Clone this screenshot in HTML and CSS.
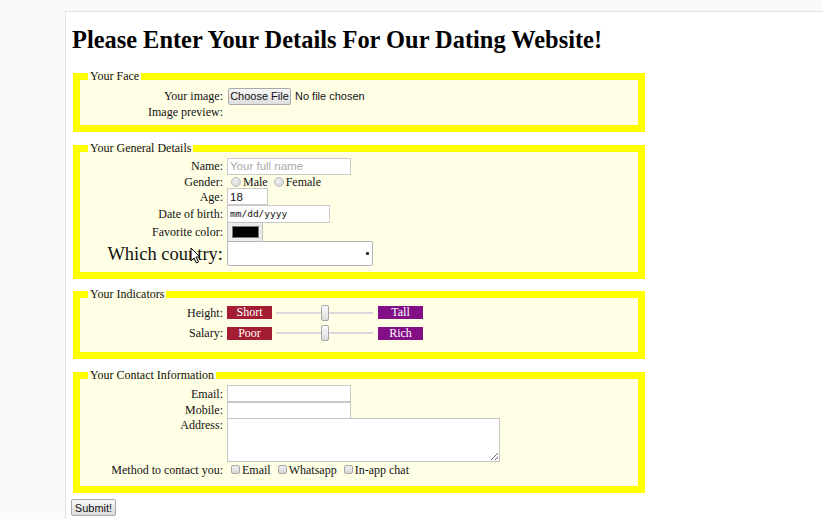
FILE: index.html
```html
<!DOCTYPE html>
<html>
<head>
<meta charset="utf-8">
<title>Dating Website</title>
<link rel="stylesheet" href="styles.css">
</head>
<body>
<div class="page">
  <h1>Please Enter Your Details For Our Dating Website!</h1>
  <form>
    <fieldset class="fs fs-face">
      <legend>Your Face</legend>
      <div class="grid">
        <label class="lbl">Your image:</label>
        <div class="ctrl"><button type="button" class="filebtn">Choose File</button><span class="nofile">No file chosen</span></div>
        <label class="lbl">Image preview:</label>
        <div class="ctrl"></div>
      </div>
    </fieldset>

    <fieldset class="fs fs-general">
      <legend>Your General Details</legend>
      <div class="grid">
        <label class="lbl">Name:</label>
        <div class="ctrl"><input class="txt w124" type="text" placeholder="Your full name"></div>
        <label class="lbl">Gender:</label>
        <div class="ctrl opts"><span class="radio"></span><span class="opt">Male</span><span class="radio"></span><span class="opt">Female</span></div>
        <label class="lbl">Age:</label>
        <div class="ctrl"><input class="txt w41" type="text" value="18"></div>
        <label class="lbl">Date of birth:</label>
        <div class="ctrl"><input class="txt date" type="text" value="mm/dd/yyyy"></div>
        <label class="lbl">Favorite color:</label>
        <div class="ctrl"><span class="colorbtn"><span class="swatch"></span></span></div>
        <label class="lbl big">Which country:</label>
        <div class="ctrl"><span class="select"><span class="dot"></span></span></div>
      </div>
      <svg class="cursor" width="11" height="17" viewBox="0 0 11 17"><path d="M1 1 L1 14 L4 11 L6.5 16 L8.5 15 L6 10 L10 10 Z" fill="#fff" stroke="#000" stroke-width="1"/></svg>
    </fieldset>

    <fieldset class="fs fs-ind">
      <legend>Your Indicators</legend>
      <div class="grid">
        <label class="lbl">Height:</label>
        <div class="ctrl"><span class="badge red">Short</span><span class="range"><span class="track"></span><span class="thumb"></span></span><span class="badge purple">Tall</span></div>
        <label class="lbl">Salary:</label>
        <div class="ctrl"><span class="badge red">Poor</span><span class="range"><span class="track"></span><span class="thumb"></span></span><span class="badge purple">Rich</span></div>
      </div>
    </fieldset>

    <fieldset class="fs fs-contact">
      <legend>Your Contact Information</legend>
      <div class="grid">
        <label class="lbl">Email:</label>
        <div class="ctrl"><input class="txt w124" type="text"></div>
        <label class="lbl">Mobile:</label>
        <div class="ctrl"><input class="txt w124" type="text"></div>
        <label class="lbl top">Address:</label>
        <div class="ctrl top"><textarea class="area"></textarea></div>
        <label class="lbl">Method to contact you:</label>
        <div class="ctrl opts"><span class="check"></span><span class="opt">Email</span><span class="check"></span><span class="opt">Whatsapp</span><span class="check"></span><span class="opt">In-app chat</span></div>
      </div>
    </fieldset>

    <button type="button" class="submit">Submit!</button>
  </form>
</div>
</body>
</html>
```

FILE: styles.css
```css
html, body {
  margin: 0;
  padding: 0;
  background: #fbf9fb;
  height: 100%;
}
body {
  font-family: "Liberation Serif", "Times New Roman", serif;
  font-size: 12px;
  color: #111;
  overflow: hidden;
}
.page {
  box-sizing: border-box;
  margin: 11px 0 0 65px;
  border-left: 1px solid #e3e1e3;
  border-top: 1px solid #e3e1e3;
  background: #fff;
  padding: 0 0 0 5px;
  height: 508px;
  overflow: hidden;
}
h1 {
  margin: 0;
  padding: 14px 0 0 1px;
  margin-bottom: 19px;
  font-size: 24.4px;
  line-height: 28px;
  font-weight: bold;
  color: #000;
}
form { margin: 0; }
.fs {
  box-sizing: border-box;
  width: 572px;
  margin: 0 0 13px 2px;
  padding: 0;
  border: 7px solid #ffff00;
  background: #ffffe6;
  position: relative;
}
.fs-general { margin-bottom: 12px; }
.fs-contact { margin-bottom: 6px; }
legend {
  font-size: 12px;
  line-height: 7px;
  padding: 0 2px;
  margin-left: 8px;
  color: #111;
}
.grid {
  display: grid;
  grid-template-columns: 143px auto;
  column-gap: 4px;
  align-items: center;
}
.fs-face .grid { padding: 7px 0 6px; grid-template-rows: 18px 14px; }
.fs-general .grid { padding: 5px 0 6px; grid-template-rows: 18px 13px 17px 17px 19px 25px; }
.fs-ind .grid { padding: 5px 0 8px; grid-template-rows: 19px 22px; }
.fs-contact .grid { padding: 6px 0 9px; grid-template-rows: 17px 16px 44px 15px; }
.lbl {
  text-align: right;
  line-height: 14px;
  white-space: nowrap;
}
.lbl.big { font-size: 18.5px; line-height: 22px; }
.lbl.top, .ctrl.top { align-self: start; }
.ctrl {
  display: flex;
  align-items: center;
  min-height: 1px;
  white-space: nowrap;
}
.filebtn {
  box-sizing: border-box;
  width: 63px;
  height: 17px;
  margin-left: 1px;
  padding: 0;
  white-space: nowrap;
  font-family: "Liberation Sans", Arial, sans-serif;
  font-size: 11px;
  line-height: 15px;
  color: #111;
  background: linear-gradient(#f6f6f6, #dedede);
  border: 1px solid #a9a9a9;
  border-radius: 2px;
}
.nofile {
  margin-left: 4px;
  font-family: "Liberation Sans", Arial, sans-serif;
  font-size: 11px;
  color: #111;
}
.txt {
  box-sizing: border-box;
  height: 17px;
  margin: 0;
  padding: 0 2px;
  border: 1px solid #c9c9c9;
  background: #fff;
  font-family: "Liberation Sans", Arial, sans-serif;
  font-size: 11.5px;
  color: #111;
  outline: none;
}
.txt::placeholder { color: #aaa; }
.w124 { width: 124px; }
.w41 { width: 41px; }
.date {
  width: 103px;
  height: 18px;
  font-family: "DejaVu Sans Mono", "Liberation Mono", monospace;
  font-size: 9.5px;
}
.opts .opt {
  font-size: 12px;
  line-height: 14px;
}
.radio {
  box-sizing: border-box;
  width: 10px;
  height: 10px;
  margin: 0 2px 0 4px;
  border-radius: 50%;
  border: 1px solid #bdbdbd;
  background: radial-gradient(circle at 40% 35%, #f2f2f2, #cfcfcf);
}
.opt + .radio { margin-left: 6px; }
.check {
  box-sizing: border-box;
  width: 9px;
  height: 9px;
  margin: 0 2px 0 4px;
  border-radius: 2px;
  border: 1px solid #a8a8a8;
  background: linear-gradient(#f0f0f0, #d6d6d6);
}
.opt + .check { margin-left: 7px; }
.colorbtn {
  box-sizing: border-box;
  width: 36px;
  height: 20px;
  padding: 3px 3px 0 4px;
  border: 1px solid #bfbfbf;
  background: #ececec;
  display: flex;
  align-items: flex-start;
}
.swatch {
  display: block;
  width: 29px;
  height: 12px;
  background: #000;
  border: 1px solid #777;
  box-sizing: border-box;
}
.select {
  box-sizing: border-box;
  width: 146px;
  height: 25px;
  border: 1px solid #b5b5b5;
  border-radius: 2px;
  background: #fff;
  display: flex;
  align-items: center;
  justify-content: flex-end;
  padding-right: 3px;
}
.dot {
  width: 3px;
  height: 3px;
  background: #222;
  border-radius: 1px;
}
.badge {
  box-sizing: border-box;
  width: 45px;
  height: 13px;
  line-height: 13px;
  text-align: center;
  color: #fff;
  font-size: 12px;
}
.red { background: #a31d33; }
.purple { background: #820f86; }
.range {
  width: 97px;
  height: 16px;
  margin: 0 5px 0 4px;
  display: flex;
  align-items: center;
  justify-content: center;
  position: relative;
}
.track {
  position: absolute;
  left: 0;
  right: 0;
  top: 7px;
  height: 2px;
  background: #d9d9d9;
}
.thumb {
  position: relative;
  box-sizing: border-box;
  width: 8px;
  height: 16px;
  border: 1px solid #a8a8a8;
  border-radius: 2px;
  background: linear-gradient(#fafafa, #dcdcdc);
}
.area {
  box-sizing: border-box;
  width: 273px;
  height: 44px;
  margin: 0;
  border: 1px solid #c4c4c4;
  background: #fff;
  resize: both;
}
.submit {
  box-sizing: border-box;
  width: 45px;
  height: 17px;
  padding: 0;
  font-family: "Liberation Sans", Arial, sans-serif;
  font-size: 11px;
  color: #111;
  background: linear-gradient(#f7f7f7, #dcdcdc);
  border: 1px solid #a9a9a9;
  border-radius: 2px;
}
.cursor {
  position: absolute;
  left: 110px;
  top: 95px;
}
```
